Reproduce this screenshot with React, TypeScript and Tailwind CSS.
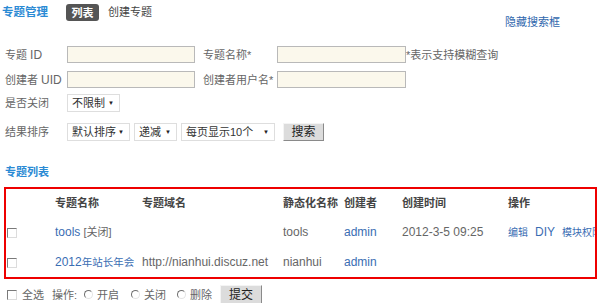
import React from "react";

const font = { fontFamily: '"Liberation Sans", "Noto Sans CJK SC", sans-serif' };

function Check() {
  return (
    <span className="inline-block h-[10px] w-[10px] border border-t-[#7a7a7a] border-l-[#7a7a7a] border-r-[#dcdcdc] border-b-[#dcdcdc] bg-white align-middle" />
  );
}

function Radio() {
  return (
    <span className="inline-block h-[9px] w-[9px] rounded-full border border-t-[#6f6f6f] border-l-[#6f6f6f] border-r-[#e4e4e4] border-b-[#e4e4e4] bg-white" />
  );
}

function Field({ w }: { w: string }) {
  return <div className={`${w} h-[17px] shrink-0 border border-[#b9b9b9] bg-[#fbf8ec]`} />;
}

function Drop({ label, w }: { label: string; w: string }) {
  return (
    <div className={`${w} flex h-[18px] shrink-0 items-center justify-between whitespace-nowrap border border-[#dedede] bg-white pl-[4px] pr-[5px] text-[#333]`}>
      <span>{label}</span>
      <span className="text-[6px] leading-none text-[#222]">▼</span>
    </div>
  );
}

export default function App() {
  return (
    <div className="h-[303px] w-[600px] overflow-hidden whitespace-nowrap bg-white text-[11px] leading-[14px] text-[#666]" style={font}>
      {/* 页头 */}
      <div className="flex h-[28px] items-start pl-[2px] pt-[4px]">
        <span className="mt-[1px] text-[11.5px] font-bold text-[#2a8ad4]">专题管理</span>
        <span className="ml-[18px] flex h-[17px] w-[33px] items-center justify-center rounded-[3px] bg-[#555] font-bold text-white">
          列表
        </span>
        <span className="ml-[9px] mt-[1px] text-[#444]">创建专题</span>
        <a className="ml-auto mr-[40px] mt-[11px] text-[#2f67ad]">隐藏搜索框</a>
      </div>

      {/* 搜索表单 */}
      <div className="mt-[18px] flex flex-col pl-[5px]">
        <div className="flex items-center">
          <span className="w-[62px]">
            专题 <span className="text-[12px]">ID</span>
          </span>
          <Field w="w-[128px]" />
          <span className="ml-[8px] w-[74px]">专题名称*</span>
          <Field w="w-[129px]" />
          <span>*表示支持模糊查询</span>
        </div>
        <div className="mt-[8px] flex items-center">
          <span className="w-[62px]">
            创建者 <span className="text-[12px]">UID</span>
          </span>
          <Field w="w-[128px]" />
          <span className="ml-[8px] w-[74px]">创建者用户名*</span>
          <Field w="w-[129px]" />
        </div>
        <div className="mt-[6px] flex items-center">
          <span className="w-[62px]">是否关闭</span>
          <Drop label="不限制" w="w-[53px]" />
        </div>
        <div className="mt-[11px] flex items-center">
          <span className="w-[62px]">结果排序</span>
          <Drop label="默认排序" w="w-[63px]" />
          <div className="ml-[4px]">
            <Drop label="递减" w="w-[43px]" />
          </div>
          <div className="ml-[4px]">
            <Drop label="每页显示10个" w="w-[94px]" />
          </div>
          <button className="ml-[8px] h-[18px] w-[41px] border border-t-[#f4f4f4] border-l-[#f4f4f4] border-r-[#8a8a8a] border-b-[#8a8a8a] bg-[#dcdcdc] text-[12px] text-[#222]">
            搜索
          </button>
        </div>
      </div>

      {/* 专题列表 */}
      <div className="mt-[24px] pl-[5px] font-bold text-[#2a8ad4]">专题列表</div>

      <div className="ml-[4px] mt-[8px] w-[593px] overflow-hidden border-2 border-[#ee0000]">
        <table className="w-[700px] table-fixed border-collapse">
          <colgroup>
            <col className="w-[49px]" />
            <col className="w-[87px]" />
            <col className="w-[141px]" />
            <col className="w-[61px]" />
            <col className="w-[58px]" />
            <col className="w-[106px]" />
            <col className="w-[198px]" />
          </colgroup>
          <thead>
            <tr className="h-[28px] text-left text-[#444]">
              <th className="font-bold" />
              <th className="font-bold">专题名称</th>
              <th className="font-bold">专题域名</th>
              <th className="font-bold">静态化名称</th>
              <th className="font-bold">创建者</th>
              <th className="font-bold">创建时间</th>
              <th className="font-bold">操作</th>
            </tr>
          </thead>
          <tbody>
            <tr className="h-[30px]">
              <td className="pl-[1px]">
                <Check />
              </td>
              <td>
                <a className="text-[12px] text-[#3a6db3]">tools</a> [关闭]
              </td>
              <td />
              <td className="text-[12px]">tools</td>
              <td className="text-[12px] text-[#3a6db3]">admin</td>
              <td className="text-[12px]">2012-3-5 09:25</td>
              <td className="text-[10px] text-[#3a6db3]">
                编辑<span className="ml-[7px] text-[12px]">DIY</span>
                <span className="ml-[7px]">模块权限</span>
              </td>
            </tr>
            <tr className="h-[30px]">
              <td className="pl-[1px]">
                <Check />
              </td>
              <td className="text-[10.5px] text-[#3a6db3]">
                <span className="text-[12px]">2012</span>年站长年会
              </td>
              <td className="text-[12px]">http://nianhui.discuz.net</td>
              <td className="text-[12px]">nianhui</td>
              <td className="text-[12px] text-[#3a6db3]">admin</td>
              <td />
              <td />
            </tr>
          </tbody>
        </table>
      </div>

      {/* 批量操作 */}
      <div className="mt-[6px] flex items-center pl-[7px]">
        <Check />
        <span className="ml-[5px]">全选</span>
        <span className="ml-[8px]">操作:</span>
        <span className="ml-[7px] flex items-center">
          <Radio />
        </span>
        <span className="ml-[4px]">开启</span>
        <span className="ml-[12px] flex items-center">
          <Radio />
        </span>
        <span className="ml-[4px]">关闭</span>
        <span className="ml-[11px] flex items-center">
          <Radio />
        </span>
        <span className="ml-[4px]">删除</span>
        <button className="ml-[8px] h-[19px] w-[42px] border border-t-[#f4f4f4] border-l-[#f4f4f4] border-r-[#8a8a8a] border-b-[#8a8a8a] bg-[#dcdcdc] text-[12px] text-[#222]">
          提交
        </button>
      </div>
    </div>
  );
}
